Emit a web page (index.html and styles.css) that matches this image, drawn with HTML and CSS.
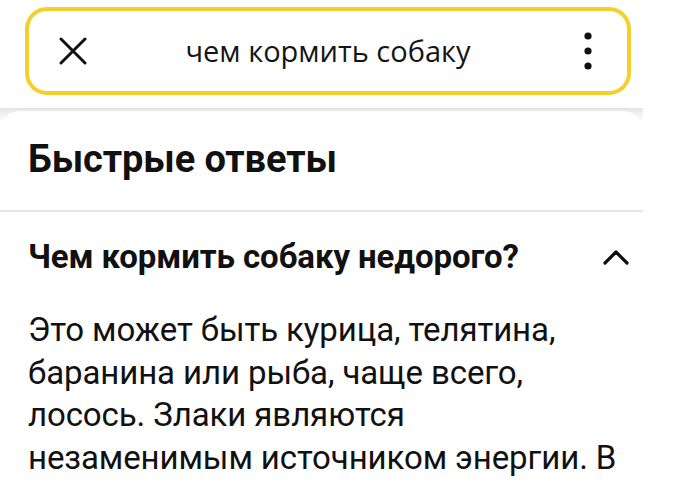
FILE: index.html
```html
<!DOCTYPE html>
<html lang="ru">
<head>
<meta charset="utf-8">
<title>чем кормить собаку</title>
<link rel="stylesheet" href="styles.css">
</head>
<body>
<header class="top">
  <div class="search">
    <button class="icon-btn close" aria-label="Закрыть">
      <svg width="28" height="28" viewBox="0 0 28 28"><path d="M2 2 L26 26 M26 2 L2 26" stroke="#111" stroke-width="3" stroke-linecap="round" fill="none"/></svg>
    </button>
    <div class="query">чем кормить собаку</div>
    <button class="icon-btn more" aria-label="Меню">
      <svg width="10" height="40" viewBox="0 0 10 40"><circle cx="5" cy="5" r="3.6" fill="#111"/><circle cx="5" cy="20" r="3.6" fill="#111"/><circle cx="5" cy="35" r="3.6" fill="#111"/></svg>
    </button>
  </div>
</header>
<main class="sheet">
  <section class="card">
    <h1 class="title">Быстрые ответы</h1>
    <div class="qa">
      <div class="question">
        <h2>Чем кормить собаку недорого?</h2>
        <svg class="chev" width="26" height="16" viewBox="0 0 26 16"><path d="M2 14 L13 3 L24 14" stroke="#111" stroke-width="3.2" fill="none" stroke-linecap="round" stroke-linejoin="round"/></svg>
      </div>
      <p class="answer">Это может быть курица, телятина,<br>баранина или рыба, чаще всего,<br>лосось. Злаки являются<br>незаменимым источником энергии. В</p>
    </div>
  </section>
</main>
</body>
</html>
```

FILE: styles.css
```css
html, body {
  margin: 0;
  padding: 0;
  background: #fff;
  width: 700px;
  height: 481px;
  overflow: hidden;
}
body {
  font-family: Roboto, "Liberation Sans", sans-serif;
  color: #111;
}
.top {
  width: 643px;
  padding: 7px 0 13px 25px;
  box-sizing: border-box;
}
.search {
  width: 606px;
  height: 88px;
  box-sizing: border-box;
  border: 4px solid #f7cf2a;
  border-radius: 22px;
  display: flex;
  align-items: center;
  padding: 0 34px 0 30px;
}
.icon-btn {
  background: none;
  border: 0;
  padding: 0;
  display: flex;
  align-items: center;
}
.query {
  flex: 1;
  text-align: center;
  font-family: "Open Sans", "Noto Sans", sans-serif;
  font-size: 29px;
  color: #151515;
  padding: 0 14px 2px 0;
}
.sheet {
  width: 643px;
  background: linear-gradient(#e3e3e3, #f2f2f2 6px, #fff 16px);
  padding-top: 3px;
}
.card {
  background: #fff;
  border-top-left-radius: 20px;
  border-top-right-radius: 20px;
}
.title {
  margin: 0;
  font-size: 38px;
  line-height: 44px;
  font-weight: 700;
  padding: 26px 28px 29px;
  border-bottom: 2px solid #e6e6e6;
  letter-spacing: -0.1px;
}
.qa {
  padding: 25px 14px 0 28px;
}
.question {
  display: flex;
  align-items: center;
  justify-content: space-between;
}
.question h2 {
  margin: 0;
  font-size: 33px;
  line-height: 40px;
  font-weight: 700;
  letter-spacing: -0.1px;
}
.answer {
  margin: 32px 0 0;
  font-size: 33px;
  line-height: 42.5px;
  white-space: nowrap;
  letter-spacing: -0.1px;
}
```
